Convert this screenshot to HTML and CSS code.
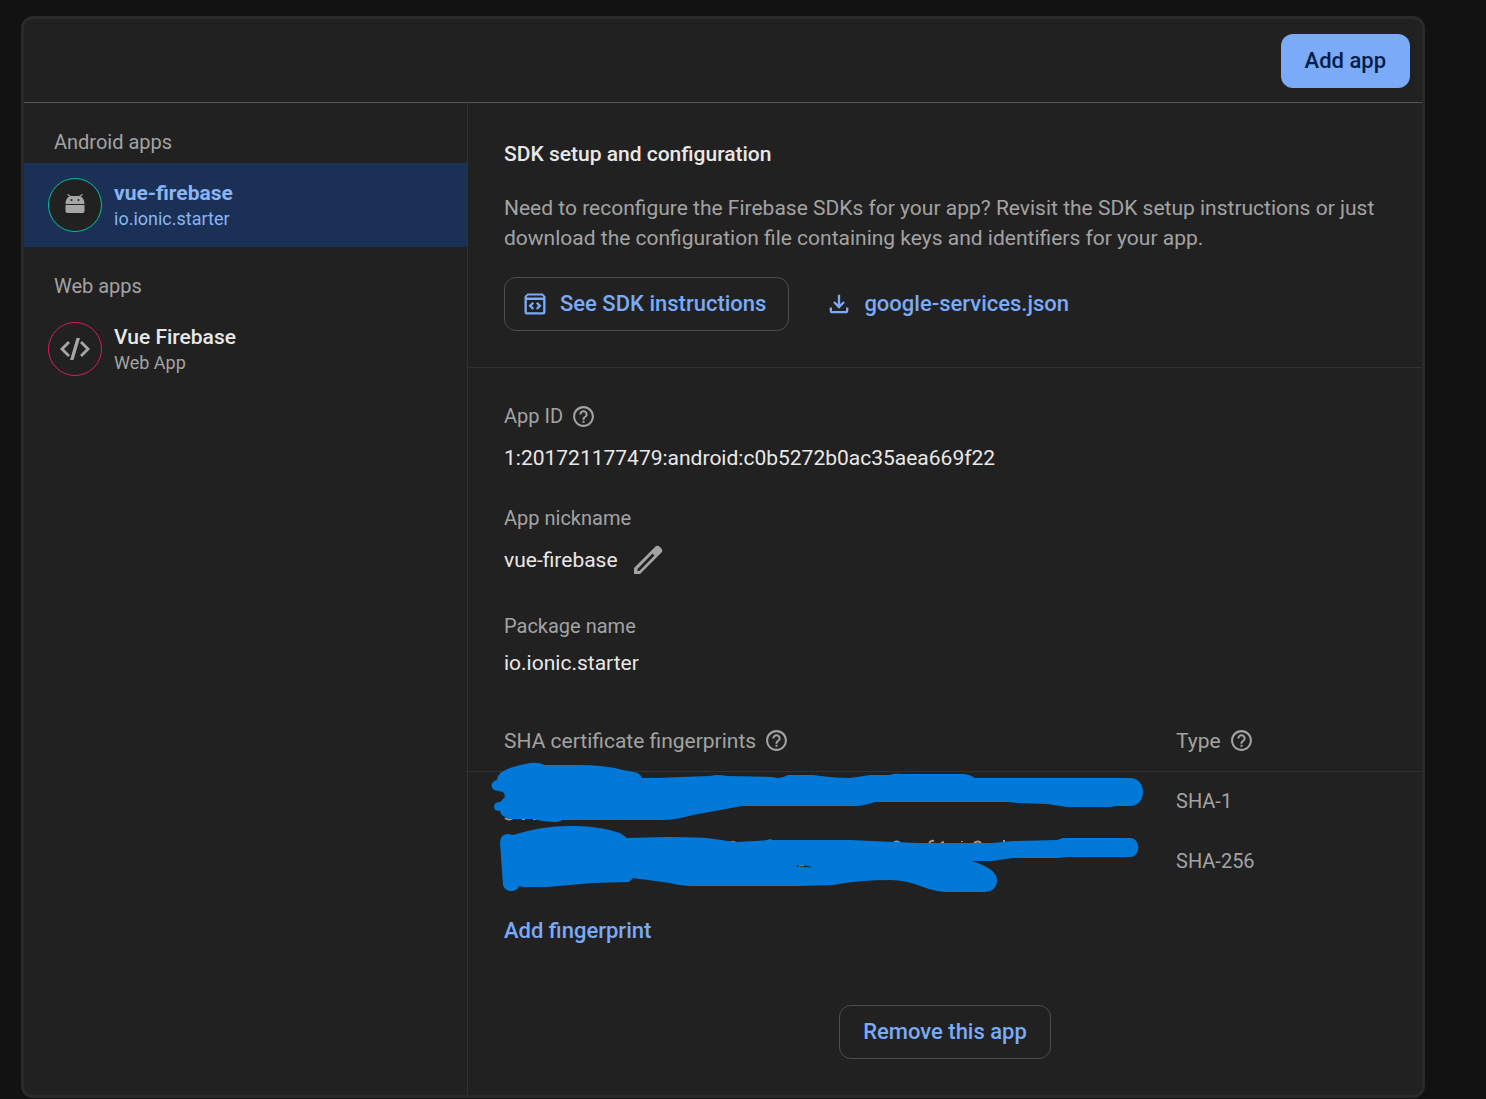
FILE: index.html
```html
<!DOCTYPE html>
<html lang="en">
<head>
<meta charset="utf-8">
<meta name="viewport" content="width=device-width, initial-scale=1">
<title>Your apps</title>
<link rel="stylesheet" href="styles.css">
</head>
<body>
<svg class="sprite" aria-hidden="true">
  <symbol id="help" viewBox="0 0 24 24"><path d="M11 18h2v-2h-2v2zm1-16C6.480 2 2 6.480 2 12s4.480 10 10 10 10-4.480 10-10S17.520 2 12 2zm0 18c-4.410 0-8-3.590-8-8s3.590-8 8-8 8 3.590 8 8-3.590 8-8 8zm0-14c-2.210 0-4 1.790-4 4h2c0-1.100.9-2 2-2s2 .9 2 2c0 2-3 1.750-3 5h2c0-2.250 3-2.500 3-5 0-2.210-1.790-4-4-4z"/></symbol>
</svg>
<main class="card">
  <header class="card-header">
    <button class="btn btn-primary" type="button">Add app</button>
  </header>
  <div class="card-body">
    <nav class="sidebar" aria-label="Apps">
      <h3 class="group-title">Android apps</h3>
      <a class="app app-selected" href="#android">
        <span class="avatar avatar-android">
          <svg width="20" height="22" viewBox="0 0 20 22"><path d="M.5 10C.5 6 2 3.500 4.500 2.500L2 .8 3 0 5.800 2h8.400l2.800-2 1 .8-2.500 1.700C18 3.500 19.500 6 19.500 10zM.5 11h19v6q0 2-2 2h-15q-2 0-2-2z"/><circle class="eye" cx="6.500" cy="6" r="1"/><circle class="eye" cx="13.500" cy="6" r="1"/></svg>
        </span>
        <span class="app-text"><span class="app-name">vue-firebase</span><span class="app-sub">io.ionic.starter</span></span>
      </a>
      <h3 class="group-title">Web apps</h3>
      <a class="app" href="#web">
        <span class="avatar avatar-web">
          <svg width="30" height="22" viewBox="0 0 30 22"><path d="M8 3l2 2-6 6 6 6-2 2-8-8zM22 3l-2 2 6 6-6 6 2 2 8-8zM16.500 0H20l-6.500 22H10z"/></svg>
        </span>
        <span class="app-text"><span class="app-name">Vue Firebase</span><span class="app-sub">Web App</span></span>
      </a>
    </nav>
    <div class="details">
      <section class="sdk">
        <h2 class="title">SDK setup and configuration</h2>
        <p class="intro">Need to reconfigure the Firebase SDKs for your app? Revisit the SDK setup instructions or just download the configuration file containing keys and identifiers for your app.</p>
        <div class="actions">
          <button class="btn btn-outline btn-icon" type="button">
            <svg width="28" height="28" viewBox="0 0 24 24"><path fill-rule="evenodd" d="M5.500 3h13L21 5.500V19q0 2-2 2H5q-2 0-2-2V5.500zM5 8.500V19h14V8.500zM6 4.800l-1 1v.7h14v-.7l-1-1zM9.800 10.200l1.400 1.400L9.300 13.600l1.900 2-1.400 1.400-3.400-3.400zM14.200 10.200l-1.400 1.400 1.900 2-1.900 2 1.400 1.400 3.400-3.400z"/></svg>
            See SDK instructions
          </button>
          <a class="download" href="google-services.json">
            <svg width="28" height="28" viewBox="0 0 24 24"><path d="M12 16l-5-5 1.400-1.450L11 12.150V4h2v8.150l2.600-2.600L17 11zM6 20q-.8 0-1.400-.6T4 18v-3h2v3h12v-3h2v3q0 .8-.6 1.400T18 20z"/></svg>
            google-services.json
          </a>
        </div>
      </section>
      <section class="info">
        <dl class="fields">
          <div class="field field-id">
            <dt>App ID <button class="help" type="button" aria-label="About app ID"><svg width="25" height="25"><use href="#help"/></svg></button></dt>
            <dd>1:201721177479:android:c0b5272b0ac35aea669f22</dd>
          </div>
          <div class="field field-editable">
            <dt>App nickname</dt>
            <dd>vue-firebase <button class="edit" type="button" aria-label="Edit nickname"><svg width="36" height="36" viewBox="0 0 36 36"><path fill-rule="evenodd" d="M4 32v-6L26 4q2-1 4 1l1 1q2 2 1 4L10 32zm3.500-3h1.800L24.500 13.500l-2-2L7.500 27z"/></svg></button></dd>
          </div>
          <div class="field">
            <dt>Package name</dt>
            <dd>io.ionic.starter</dd>
          </div>
        </dl>
        <div class="prints">
          <table class="print-table">
            <thead>
              <tr>
                <th><span class="th-label">SHA certificate fingerprints <button class="help" type="button" aria-label="About fingerprints"><svg width="25" height="25"><use href="#help"/></svg></button></span></th>
                <th class="type-col"><span class="th-label">Type <button class="help" type="button" aria-label="About types"><svg width="25" height="25"><use href="#help"/></svg></button></span></th>
              </tr>
            </thead>
            <tbody>
              <tr><td></td><td>SHA-1</td></tr>
              <tr><td></td><td>SHA-256</td></tr>
            </tbody>
          </table>
          <svg class="redaction" width="660" height="136" viewBox="0 0 660 136" aria-hidden="true">
            <path class="trace" d="M15 58q4 3 8 0M32 59h3M43 59h3M240 83q3-2 6 0M277 81q3-1 5 0M381 82h2M403 83q4-3 7 0M439 83q2-3 5-2M451 83l3-1M472 82v-1M484 83q4-3 7 0M514 82v-2M148 118h3M377 119h9M395 119h2M407 119h2"/>
            <path class="ink" d="M7 20C7 11 23 6 40 3Q48 2 55 5L87 5Q115 5 133 10L144 12Q150 13 152 18L170 18 190 17 220 16Q227 14 237 16L283 17Q289 20 298 15L323 15Q343 18 360 18L380 15 400 15Q404 13 410 14L473 14Q479 14 485 18L640 18C648 18 653 24 653 32S648 46 640 46L627 46 620 47 577 47 557 44 527 43 520 42 385 42Q372 46 367 46L252 46 203 55Q185 60 173 60L72 60Q70 62 64 62Q53 62 43 59L23 59Q11 58 10 51 4 51 4 47 4 42 10 42L15 37Q15 34 13 32L4 30Q-1 25 4 21z"/>
            <path class="ink" d="M10 83Q10 74 18 74L23 75Q53 65 87 66Q114 67 130 73L137 78 177 77Q205 77 217 78L245 82 283 80 360 80 427 83 502 83 523 81 567 80 573 78 640 78C651 78 651 97 640 97L577 97 567 98 523 98 502 101 482 101Q507 109 507 120Q507 131 495 132L457 132Q447 132 433 127Q416 120 400 120 370 120 343 125L310 126 200 126Q186 125 180 123L143 118 139 122 103 123 57 127 33 127 29 126C27 133 15 133 13 125z"/>
            <path class="gap" d="M305 106q7-2 17 1-8 1-17-1zM441 109l3 2z"/>
            <path class="trace trace-thin" d="M309 106q3-1 5 0"/>
          </svg>
        </div>
        <button class="add-print" type="button">Add fingerprint</button>
      </section>
      <div class="remove"><button class="btn btn-outline" type="button">Remove this app</button></div>
    </div>
  </div>
</main>
</body>
</html>
```
FILE: styles.css
```css
* { box-sizing: border-box; }
body {
  margin: 0;
  min-height: 100vh;
  padding: 16px 61px 1px 21px;
  display: flex;
  background: #121212;
  color: #e8e8e8;
  font: 400 21px/30px Roboto, sans-serif;
}
h2, h3, p, dl, dd { margin: 0; }
button { font: inherit; color: inherit; background: none; border: 0; padding: 0; cursor: pointer; }
a { text-decoration: none; color: inherit; }
svg { display: block; flex: none; fill: currentColor; }
.sprite { position: absolute; width: 0; height: 0; }
.card {
  flex: 1;
  min-width: 0;
  display: flex;
  flex-direction: column;
  border: 3px solid #2a2a2a;
  border-radius: 12px;
  background: #212121;
}
.card-header {
  display: flex;
  justify-content: flex-end;
  padding: 15px 12px 14px;
  border-bottom: 1px solid #50565a;
}
.btn, .download, .add-print { font-size: 22px; font-weight: 500; }
.btn {
  height: 54px;
  padding: 0 24px;
  border-radius: 12px;
  display: inline-flex;
  align-items: center;
}
.btn-primary { background: #7baaf7; color: #041e49; }
.btn-outline { border: 1px solid #4d4d4d; color: #7baaf7; padding: 0 23px; }
.btn-icon { padding: 0 22px 0 16px; gap: 11px; }
.card-body { flex: 1; display: flex; }
.sidebar { width: 444px; flex: none; border-right: 1px solid #303030; }
.group-title {
  padding: 24px 30px 6px;
  font-size: 20px;
  font-weight: 400;
  color: #a3a3a3;
}
.app { display: flex; align-items: center; gap: 12px; padding: 15px 24px; }
.app-selected { background: #1a3054; color: #8ab4f8; }
.app-text { display: flex; flex-direction: column; line-height: 26px; padding-top: 2px; }
.app-name { font-weight: 500; }
.app-selected .app-name { font-weight: 700; }
.app-sub { font-size: 18px; }
.app:not(.app-selected) .app-sub { color: #a3a3a3; }
.avatar {
  width: 54px;
  height: 54px;
  display: grid;
  place-items: center;
  border-radius: 50%;
  border: 1px solid;
  background: #212121;
}
.avatar svg { fill: #a6a6a6; }
.avatar .eye { fill: #212121; }
.avatar-android { border-color: #00bfa5; }
.avatar-web { border-color: #d81b60; }
.details { flex: 1; min-width: 0; }
.sdk { padding: 36px; border-bottom: 1px solid #303030; }
.title { font-size: 21px; font-weight: 500; }
.intro { margin: 24px 0; color: #a3a3a3; }
.actions { display: flex; gap: 36px; align-items: center; }
.download { display: flex; align-items: center; gap: 11px; color: #7baaf7; }
.fields { display: grid; gap: 33px; padding: 36px 36px 33px; }
.field { display: grid; gap: 10px; }
.field-id { gap: 15px; }
.field-editable { gap: 12px; padding-bottom: 3px; }
dt { display: flex; align-items: center; gap: 8px; height: 24px; font-size: 20px; color: #a3a3a3; }
dd { display: flex; align-items: center; gap: 12px; }
.help, .edit { color: #a3a3a3; }
.prints { position: relative; }
.print-table { width: 100%; border-collapse: collapse; table-layout: fixed; color: #a3a3a3; font-size: 20px; text-align: left; }
.print-table th { height: 60px; padding: 0 0 0 36px; font-weight: 400; font-size: 21px; border-bottom: 1px solid #303030; }
.print-table td { height: 60px; padding: 0 0 0 36px; }
.print-table .type-col { width: 282px; }
.th-label { display: flex; align-items: center; gap: 8px; }
.redaction { position: absolute; left: 22px; top: 49px; }
.ink { fill: #0078d7; }
.gap { fill: #212121; }
.trace { fill: none; stroke: #9a9a9a; stroke-width: 2px; }
.trace-thin { stroke-width: 1px; }
.add-print { margin: 25px 36px 0; color: #7baaf7; }
.remove { display: flex; justify-content: center; padding: 59px 36px 36px; }
```
